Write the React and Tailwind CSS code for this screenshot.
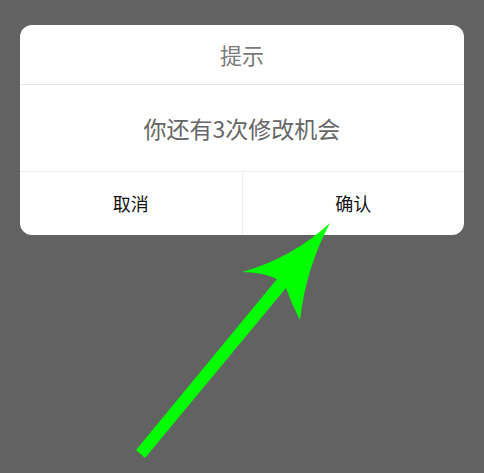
const font = { fontFamily: '"Noto Sans CJK SC", "Noto Sans", sans-serif' };

const Arrow = () => (
  <svg className="absolute left-0 top-0" width="484" height="473" viewBox="0 0 484 473">
    <path
      d="M330,223 Q292,258 242,272 Q262,272 277,279 L136,450 L145,458 L286,288 Q292,305 300,320 Q306,268 330,223 Z"
      fill="#00ff00"
    />
  </svg>
);

const App = () => {
  return (
    <div className="relative w-[484px] h-[473px] bg-[#626262] overflow-hidden" style={font}>
      <div className="pt-[25px] px-5">
        <div className="bg-white rounded-xl h-[210px] flex flex-col">
          <div className="h-[60px] flex items-center justify-center border-b border-[#e8e8e8]">
            <p className="text-[22px] text-[#7a7a7a]">提示</p>
          </div>
          <div className="h-[87px] flex items-center justify-center border-b border-[#ececec]">
            <p className="text-[23px] text-[#666666]">你还有3次修改机会</p>
          </div>
          <div className="flex-1 flex">
            <div className="flex-1 flex items-center justify-center border-r border-[#ececec]">
              <span className="text-[18px] text-[#111111]">取消</span>
            </div>
            <div className="flex-1 flex items-center justify-center">
              <span className="text-[18px] text-[#111111]">确认</span>
            </div>
          </div>
        </div>
      </div>
      <Arrow />
    </div>
  );
};

export default App;
